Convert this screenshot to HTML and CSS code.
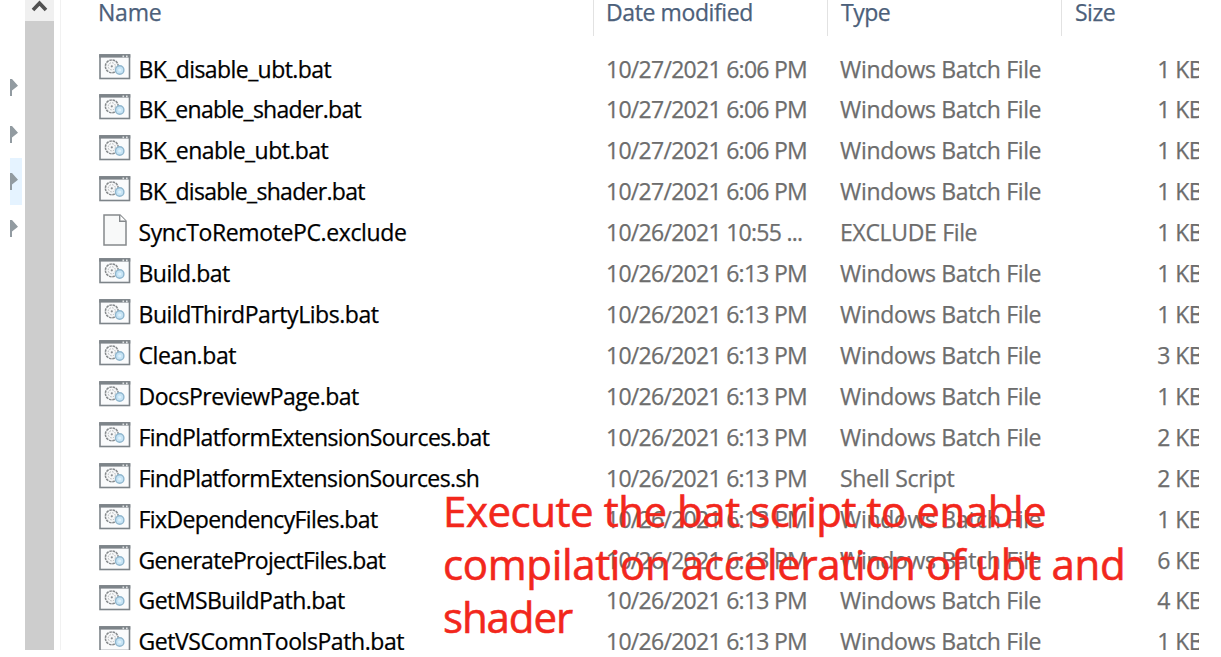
FILE: index.html
```html
<!DOCTYPE html>
<html lang="en">
<head>
<meta charset="utf-8">
<title>Batch files</title>
<link rel="stylesheet" href="styles.css">
</head>
<body>
<svg class="defs" width="0" height="0" aria-hidden="true">
<symbol id="bat" viewBox="0 0 32 26">
<rect x="1" y="1" width="29.5" height="23.5" fill="#fafbfc" stroke="#7d8489" stroke-width="1.6"/>
<path d="M0.2 1.9H31.3" stroke="#7d8489" stroke-width="3.4"/>
<path d="M23.5 2.4h1.6M27 2.4h1.6" stroke="#dfe2e4" stroke-width="1.6"/>
<circle cx="12.8" cy="12.3" r="6.4" fill="#f6f7f8" stroke="#85898c" stroke-width="1.5" stroke-dasharray="2.6 .75"/>
<circle cx="12.8" cy="12.3" r="3.6" fill="none" stroke="#b5b8ba" stroke-width="1" stroke-dasharray="1.6 1.2"/>
<circle cx="12.8" cy="12.3" r="1.1" fill="#8a8e91"/>
<circle cx="20.7" cy="16" r="4.2" fill="#c5e3f5" stroke="#8fb6ce" stroke-width="1.4"/>
<circle cx="20.7" cy="16" r="1.6" fill="#dff2fc"/>
</symbol>
<symbol id="doc" viewBox="0 0 24 32">
<path d="M1 1H17L23 7V31H1Z" fill="#f8f9f9" stroke="#85898c" stroke-width="1.5"/>
<path d="M16.7 1V7.3H23" fill="#fff" stroke="#85898c" stroke-width="1.4"/>
</symbol>
</svg>
<main class="window">
<aside class="tree"><i class="arrow"></i><i class="arrow"></i><i class="arrow current"></i><i class="arrow"></i></aside>
<div class="scrollbar"><svg class="up" viewBox="0 0 29 21"><path d="M8 10L14.5 3.2L21 10" fill="none" stroke="#505050" stroke-width="3.6"/></svg></div>
<section class="files">
<header class="head"><span class="h-name">Name</span><span class="h-date">Date modified</span><span class="h-type">Type</span><span class="h-size">Size</span></header>
<div class="rows" id="rows"></div>
</section>
<p class="caption"><span class="l1">Execute the bat script to enable</span><br><span class="l2">compilation acceleration of ubt and</span><br><span class="l3">shader</span></p>
</main>
<script src="files.js"></script>
</body>
</html>
```
FILE: styles.css
```css
body { margin: 0; background: #fff; font-family: "Open Sans", "Noto Sans", sans-serif; }
.defs { position: absolute; }
.window { position: relative; display: flex; width: 1199px; height: 650px; overflow: hidden; }
.tree { width: 13px; padding: 64px 3px 0 10px; }
.arrow { display: block; height: 47px; }
.arrow.current { height: 47px; }
.arrow::before { content: ""; display: block; width: 8px; height: 17px; background: #929ba1; clip-path: polygon(0 0, 25% 0, 100% 40%, 25% 68%, 25% 100%, 0 100%); transform: translateY(15px); }
.current { background: #e5f3ff; }
.scrollbar { flex: none; width: 29px; height: 650px; background: #cdcdcd; }
.up { display: block; width: 29px; height: 21px; background: #f0f0f0; }
.files { flex: none; width: 1138px; margin-left: 6px; border-left: 1px solid #f1f1f1; }
.head { display: flex; height: 36px; font-size: 23px; line-height: 24px; color: #4c607a; -webkit-text-stroke: .25px; }
.head span { box-sizing: border-box; white-space: nowrap; }
.h-name { width: 532px; padding-left: 37px; letter-spacing: -.2px; }
.h-date { width: 234px; padding-left: 12px; border-left: 1px solid #e2e2e2; letter-spacing: -.4px; }
.h-type { width: 234px; padding-left: 13px; border-left: 1px solid #e2e2e2; letter-spacing: -.5px; }
.h-size { width: 137px; padding-left: 13px; border-left: 1px solid #e2e2e2; letter-spacing: -.5px; }
.rows { padding-top: 12.5px; }
.row { display: grid; grid-template-columns: 39.5px 467.5px 234px 240px 123px; height: 40.93px; padding-left: 38px; line-height: 40px; font-size: 23px; color: #6d6d6d; white-space: nowrap; -webkit-text-stroke: .25px; }
.icon { width: 32px; height: 26px; margin-top: 5px; }
.icon.doc { width: 24px; height: 32px; margin: 2px 0 0 4px; }
.name { color: #000; }
.date { letter-spacing: -.72px; }
.type { letter-spacing: -.33px; }
.size { text-align: right; letter-spacing: -.6px; }
.caption { position: absolute; left: 443px; top: 484px; margin: 0; font-size: 42px; line-height: 53px; color: #f2271c; white-space: nowrap; -webkit-text-stroke: .6px; }
.l1 { letter-spacing: -.45px; }
.l2 { letter-spacing: -.33px; }
.l3 { letter-spacing: -1.1px; }
```
FILE: files.js
```js
// Each entry: name, date, type, size in KB, name tracking in px.
const t = "10/26/2021 6:13 PM", b = "Windows Batch File";
const files = [
["BK_disable_ubt.bat", "10/27/2021 6:06 PM", b, 1, -.58],
["BK_enable_shader.bat", "10/27/2021 6:06 PM", b, 1, -.73],
["BK_enable_ubt.bat", "10/27/2021 6:06 PM", b, 1, -.56],
["BK_disable_shader.bat", "10/27/2021 6:06 PM", b, 1, -.69],
["SyncToRemotePC.exclude", "10/26/2021 10:55 ...", "EXCLUDE File", 1, -.38],
["Build.bat", t, b, 1, -.5],
["BuildThirdPartyLibs.bat", t, b, 1, -.45],
["Clean.bat", t, b, 3, -.4],
["DocsPreviewPage.bat", t, b, 1, -.5],
["FindPlatformExtensionSources.bat", t, b, 2, -.58],
["FindPlatformExtensionSources.sh", t, "Shell Script", 2, -.6],
["FixDependencyFiles.bat", t, b, 1, -.61],
["GenerateProjectFiles.bat", t, b, 6, -.69],
["GetMSBuildPath.bat", t, b, 4, -.53],
["GetVSComnToolsPath.bat", t, b, 1, -.43]
];
document.getElementById("rows").innerHTML = files.map(([name, date, type, size, tracking]) => {
const kind = name.endsWith("exclude") ? "doc" : "bat";
return `<div class="row"><svg class="icon ${kind}"><use href="#${kind}"/></svg><span class="name" style="letter-spacing:${tracking}px">${name}</span><span class="date">${date}</span><span class="type">${type}</span><span class="size">${size} KB</span></div>`;
}).join("");
```
